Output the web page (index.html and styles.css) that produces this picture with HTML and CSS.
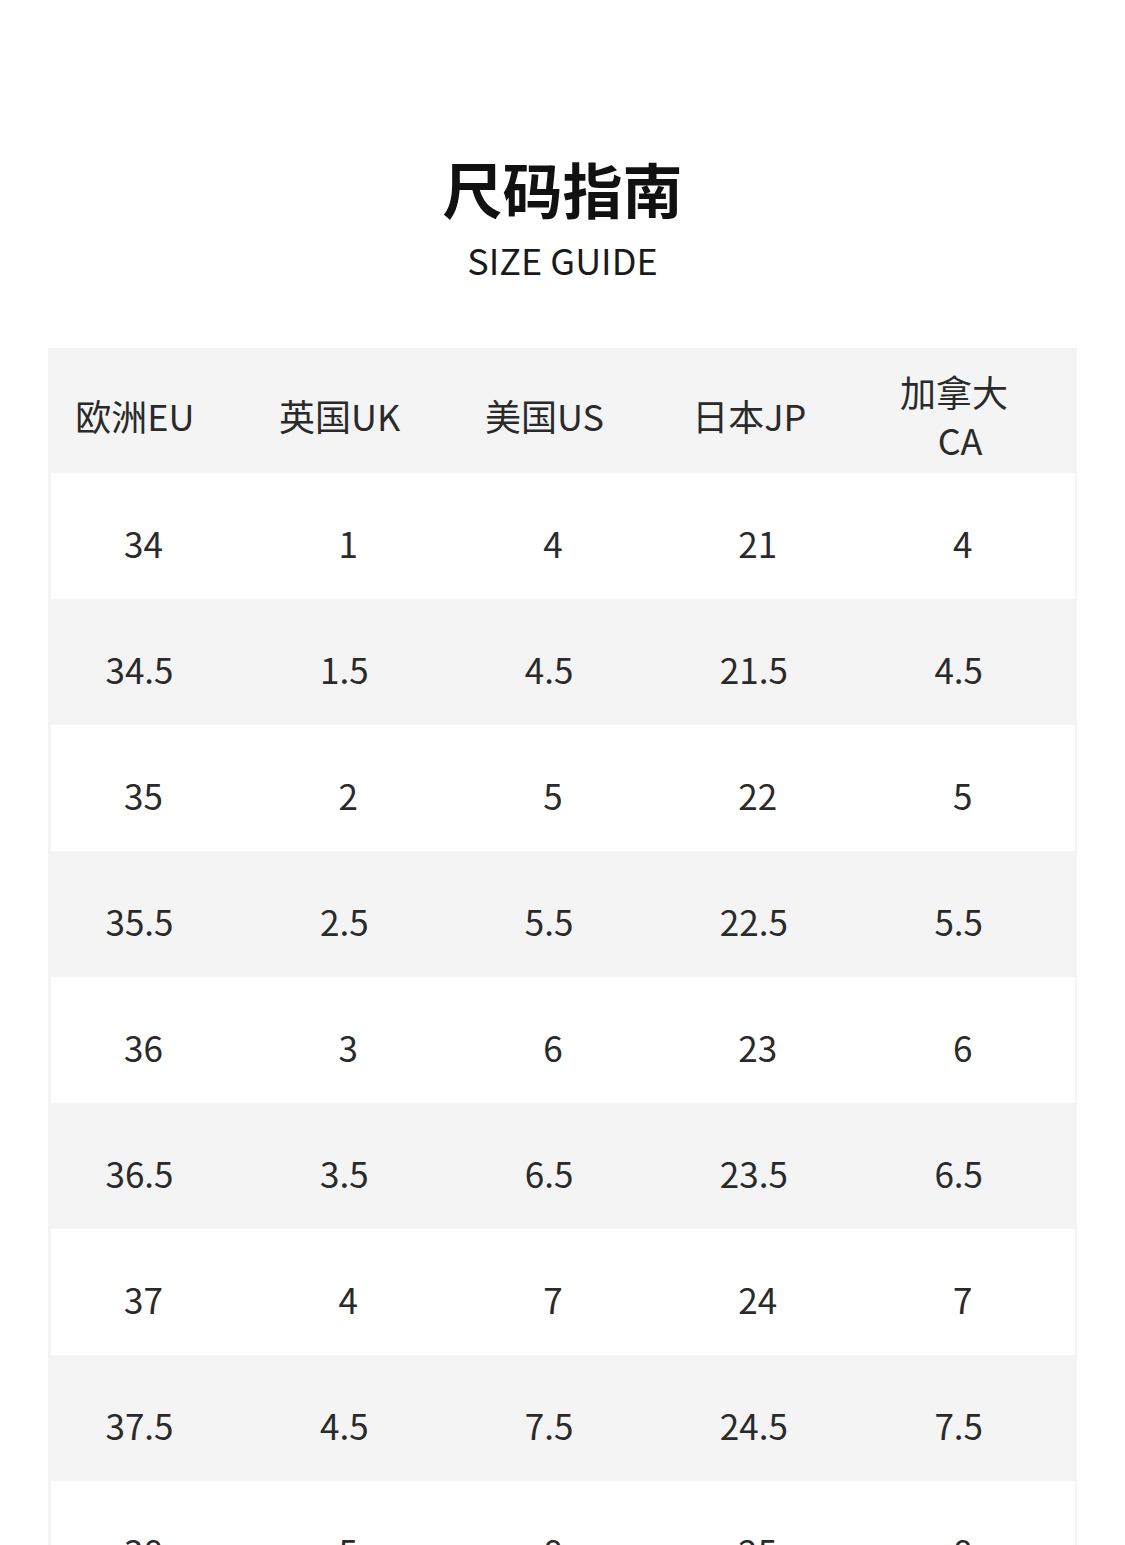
FILE: index.html
```html
<!DOCTYPE html>
<html lang="zh">
<head>
<meta charset="utf-8">
<title>尺码指南</title>
<link rel="stylesheet" href="styles.css">
</head>
<body>
<div class="page">
  <header class="heading">
    <h1 class="title">尺码指南</h1>
    <p class="subtitle">SIZE GUIDE</p>
  </header>
  <div class="table">
    <div class="row head">
      <div class="cell">欧洲EU</div>
      <div class="cell">英国UK</div>
      <div class="cell">美国US</div>
      <div class="cell">日本JP</div>
      <div class="cell">加拿大<br><span class="ca">CA</span></div>
    </div>
    <div class="row white"><div class="cell">34</div><div class="cell">1</div><div class="cell">4</div><div class="cell">21</div><div class="cell">4</div></div>
    <div class="row grey"><div class="cell">34.5&nbsp;</div><div class="cell">1.5&nbsp;</div><div class="cell">4.5&nbsp;</div><div class="cell">21.5&nbsp;</div><div class="cell">4.5&nbsp;</div></div>
    <div class="row white"><div class="cell">35</div><div class="cell">2</div><div class="cell">5</div><div class="cell">22</div><div class="cell">5</div></div>
    <div class="row grey"><div class="cell">35.5&nbsp;</div><div class="cell">2.5&nbsp;</div><div class="cell">5.5&nbsp;</div><div class="cell">22.5&nbsp;</div><div class="cell">5.5&nbsp;</div></div>
    <div class="row white"><div class="cell">36</div><div class="cell">3</div><div class="cell">6</div><div class="cell">23</div><div class="cell">6</div></div>
    <div class="row grey"><div class="cell">36.5&nbsp;</div><div class="cell">3.5&nbsp;</div><div class="cell">6.5&nbsp;</div><div class="cell">23.5&nbsp;</div><div class="cell">6.5&nbsp;</div></div>
    <div class="row white"><div class="cell">37</div><div class="cell">4</div><div class="cell">7</div><div class="cell">24</div><div class="cell">7</div></div>
    <div class="row grey"><div class="cell">37.5&nbsp;</div><div class="cell">4.5&nbsp;</div><div class="cell">7.5&nbsp;</div><div class="cell">24.5&nbsp;</div><div class="cell">7.5&nbsp;</div></div>
    <div class="row white"><div class="cell">38</div><div class="cell">5</div><div class="cell">8</div><div class="cell">25</div><div class="cell">8</div></div>
  </div>
</div>
</body>
</html>
```

FILE: styles.css
```css
html, body {
  margin: 0;
  padding: 0;
  background: #ffffff;
}

body {
  font-family: "Noto Sans CJK SC", "Noto Sans", sans-serif;
  color: #2a2a2a;
}

.page {
  width: 1125px;
  height: 1545px;
  overflow: hidden;
}

.heading {
  padding-top: 153px;
  text-align: center;
}

.title {
  margin: 0;
  font-size: 60px;
  line-height: 70px;
  font-weight: 700;
  color: #111111;
}

.subtitle {
  margin: 15px 0 0;
  font-size: 36px;
  line-height: 42px;
  font-weight: 400;
  color: #1a1a1a;
}

.table {
  margin: 68px 0 0 48px;
  width: 1024px;
  padding: 0 2px 0 3px;
  background: #f4f4f4;
}

.row {
  display: grid;
  grid-template-columns: repeat(5, 1fr);
  height: 126px;
  margin-left: -3px;
  padding-left: 3px;
}

.row.head {
  height: 125px;
}

.row.white {
  background: #ffffff;
  margin-left: 0;
  padding-left: 0;
}

.row.grey {
  background: #f4f4f4;
}

.cell {
  display: flex;
  align-items: center;
  justify-content: center;
  text-align: center;
  font-size: 35px;
  line-height: 48px;
  padding: 14px 20px 0 0;
  white-space: pre;
}

.row.head .cell {
  display: block;
  align-self: center;
  white-space: normal;
  font-size: 36px;
  padding: 8px 56px 0 19px;
}

.ca {
  display: inline-block;
  margin-left: 12px;
}
```
